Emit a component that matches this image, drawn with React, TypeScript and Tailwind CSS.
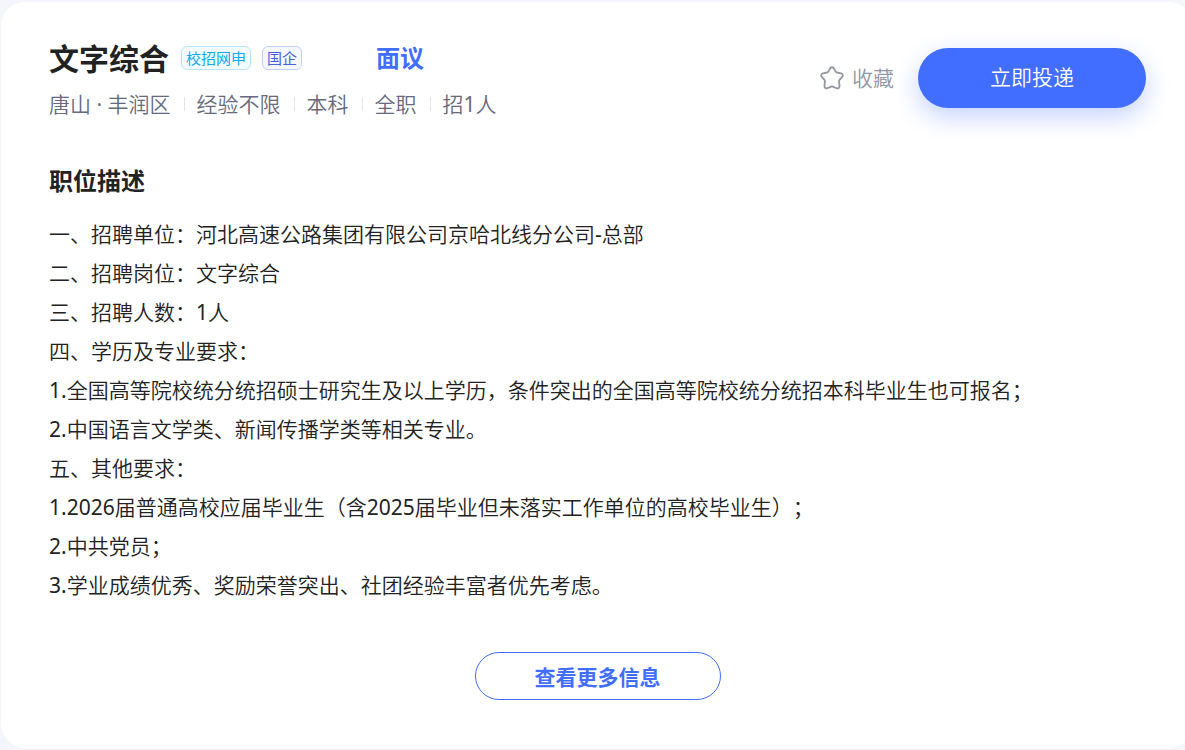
const facts = ['唐山 · 丰润区', '经验不限', '本科', '全职', '招1人'];

const description = [
  '一、招聘单位：河北高速公路集团有限公司京哈北线分公司-总部',
  '二、招聘岗位：文字综合',
  '三、招聘人数：1人',
  '四、学历及专业要求：',
  '1.全国高等院校统分统招硕士研究生及以上学历，条件突出的全国高等院校统分统招本科毕业生也可报名；',
  '2.中国语言文学类、新闻传播学类等相关专业。',
  '五、其他要求：',
  '1.2026届普通高校应届毕业生（含2025届毕业但未落实工作单位的高校毕业生）；',
  '2.中共党员；',
  '3.学业成绩优秀、奖励荣誉突出、社团经验丰富者优先考虑。',
];

// Latin numerals look too thin at the weight of the surrounding Chinese text.
function MixedText({ text }: { text: string }) {
  return text.split(/([\d.·-]+)/).map((part, i) =>
    i % 2 === 1 ? (
      <span key={i} className="font-normal">
        {part}
      </span>
    ) : (
      part
    ),
  );
}

function StarIcon() {
  return (
    <svg
      className="size-6"
      viewBox="0 0 24 24"
      fill="none"
      stroke="currentColor"
      strokeWidth="1.8"
      strokeLinejoin="round"
      aria-hidden="true"
    >
      <path d="M10.3 2.200C11 .9 13 .9 13.700 2.200L15.700 5.600C16 6.100 16.400 6.400 17 6.500L21 7.400C22.800 7.800 23.400 9.500 22.200 10.900L19.600 13.900C19.200 14.300 19 14.900 19.100 15.500L19.500 19.900C19.600 21.700 18.200 22.900 16.600 22.200L12.800 20.600C12.300 20.400 11.700 20.400 11.200 20.600L7.400 22.200C5.800 22.900 4.400 21.700 4.500 19.900L4.900 15.500C5 14.900 4.800 14.300 4.400 13.900L1.800 10.900C.6 9.500 1.200 7.800 3 7.400L7 6.500C7.600 6.400 8 6.100 8.300 5.600Z" />
    </svg>
  );
}

export default function App() {
  return (
    <div className="min-h-screen overflow-hidden bg-[#f5f6fc] py-0.5 pl-px font-['Noto_Sans','Noto_Sans_CJK_SC',sans-serif] text-[#222] [text-spacing-trim:space-all]">
      <main className="-mr-2 rounded-3xl bg-white pt-10 pr-[47px] pb-12 pl-12">
        <header className="flex items-start justify-between">
          <div>
            <div className="flex h-8 items-center">
              <h1 className="pt-0.5 text-[30px] leading-9 font-bold">文字综合</h1>
              <ul className="ml-3 flex gap-[11px] text-[15px] leading-[22px]">
                <li className="rounded-md border border-[#b5e6fb] bg-[#f3fcff] px-1 text-[#12a8ef]">校招网申</li>
                <li className="rounded-md border border-[#c3cffa] bg-[#f6f8ff] px-1 text-[#4563dc]">国企</li>
              </ul>
              <strong className="ml-[74px] text-2xl font-bold text-[#426eff]">面议</strong>
            </div>
            <ul className="mt-3.5 flex items-center text-[21px] leading-8 font-[350] text-[#666a7c]">
              {facts.map((fact, i) => (
                <li key={fact} className="flex items-center">
                  {i > 0 && <span className="mr-3 ml-[13px] h-3.5 w-px bg-[#e3e5ed]" />}
                  <span>
                    <MixedText text={fact} />
                  </span>
                </li>
              ))}
            </ul>
          </div>
          <div className="flex items-center gap-6 pt-1.5">
            <button type="button" className="flex items-center gap-2 text-[21px] leading-8 font-[350] text-[#9497a4]">
              <StarIcon />
              收藏
            </button>
            <button
              type="button"
              className="h-15 w-57 rounded-full bg-[#426eff] text-[21px] font-[350] text-white shadow-[0_9px_24px_rgba(66,110,255,0.3)]"
            >
              立即投递
            </button>
          </div>
        </header>

        <section className="mt-[43px]">
          <h2 className="text-2xl leading-9 font-bold">职位描述</h2>
          <div className="mt-4 text-[21px] leading-[39px] font-[350]">
            {description.map((line) => (
              <p key={line}>
                <MixedText text={line} />
              </p>
            ))}
          </div>
        </section>

        <div className="mt-[47px] flex justify-center">
          <button
            type="button"
            className="h-12 w-[246px] rounded-full border border-[#426eff] pt-[3px] text-[21px] font-bold text-[#426eff]"
          >
            查看更多信息
          </button>
        </div>
      </main>
    </div>
  );
}
